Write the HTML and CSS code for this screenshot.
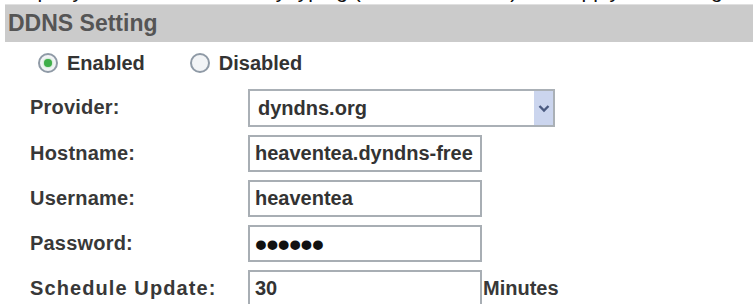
FILE: index.html
```html
<!DOCTYPE html>
<html>
<head>
<meta charset="utf-8">
<link rel="stylesheet" href="styles.css">
</head>
<body>
<div class="cut"><div class="cut-text">Input your DDNS account by typing (as shown below) then apply the setting.</div></div>
<div class="bar">DDNS Setting</div>
<div class="radios">
  <span class="radio on"><span class="dot"></span></span><span class="rlabel">Enabled</span>
  <span class="radio"></span><span class="rlabel">Disabled</span>
</div>
<div class="form">
  <div class="label">Provider:</div>
  <div class="select"><span class="sval">dyndns.org</span><span class="arrow"><svg width="12" height="9" viewBox="0 0 12 9"><path d="M1.5 2 L6 6.5 L10.5 2" fill="none" stroke="#4a5a80" stroke-width="2.4"/></svg></span></div>
  <div class="label">Hostname:</div>
  <div class="field"><span class="val">heaventea.dyndns-free</span></div>
  <div class="label">Username:</div>
  <div class="field"><span class="val">heaventea</span></div>
  <div class="label">Password:</div>
  <div class="field"><span class="val dots">••••••</span></div>
  <div class="label wide">Schedule Update:</div>
  <div class="fieldrow"><div class="field"><span class="val">30</span></div><span class="unit">Minutes</span></div>
</div>
</body>
</html>
```

FILE: styles.css
```css
html, body {
  margin: 0;
  padding: 0;
  background: #ffffff;
  overflow: hidden;
}
body {
  width: 753px;
  height: 304px;
  font-family: "Liberation Sans", Arial, sans-serif;
  color: #333333;
}
.cut {
  height: 4px;
  overflow: hidden;
}
.cut-text {
  margin-top: -21px;
  margin-left: 20px;
  font-size: 21px;
  line-height: 24px;
  color: #111;
  white-space: nowrap;
}
.bar {
  margin-left: 5px;
  height: 38px;
  background: #cbcbcb;
  border-top: 1px solid #e0e0e0;
  box-sizing: border-box;
  padding-left: 3px;
  font-weight: bold;
  font-size: 23px;
  line-height: 36px;
  color: #555555;
}
.radios {
  display: flex;
  align-items: center;
  height: 26px;
  margin-top: 8px;
  padding-left: 38px;
  font-size: 20px;
  font-weight: bold;
}
.radio {
  width: 16px;
  height: 16px;
  border: 2px solid #8f9aa6;
  border-radius: 50%;
  background: #f2f4f6;
  display: flex;
  align-items: center;
  justify-content: center;
  flex: none;
}
.radio .dot {
  width: 8px;
  height: 8px;
  border-radius: 50%;
  background: #3fae4a;
  box-shadow: 0 0 2px #7fd07f;
}
.rlabel {
  margin-left: 9px;
  margin-right: 45px;
  color: #333;
}
.form {
  display: grid;
  grid-template-columns: 218px auto;
  row-gap: 8px;
  padding-left: 30px;
  margin-top: 13px;
  font-size: 20px;
  font-weight: bold;
}
.label {
  display: flex;
  align-items: center;
  color: #383838;
  height: 37px;
  letter-spacing: 0.2px;
}
.label.wide {
  letter-spacing: 1.1px;
}
.select {
  width: 307px;
  height: 38px;
  box-sizing: border-box;
  border: 2px solid #aab0b6;
  background: #fff;
  display: flex;
  align-items: center;
  justify-content: space-between;
}
.sval {
  padding-left: 8px;
}
.arrow {
  width: 19px;
  height: 34px;
  background: #cbd5ee;
  display: flex;
  align-items: center;
  justify-content: center;
}
.field {
  width: 234px;
  height: 37px;
  box-sizing: border-box;
  border: 2px solid #a8aeb4;
  background: #fff;
  display: flex;
  align-items: center;
}
.val {
  padding-left: 5px;
  white-space: nowrap;
}
.dots {
  font-size: 34px;
  line-height: 1;
  letter-spacing: -0.5px;
  color: #111;
}
.fieldrow {
  display: flex;
  align-items: center;
}
.unit {
  margin-left: 1px;
  color: #383838;
}
```
